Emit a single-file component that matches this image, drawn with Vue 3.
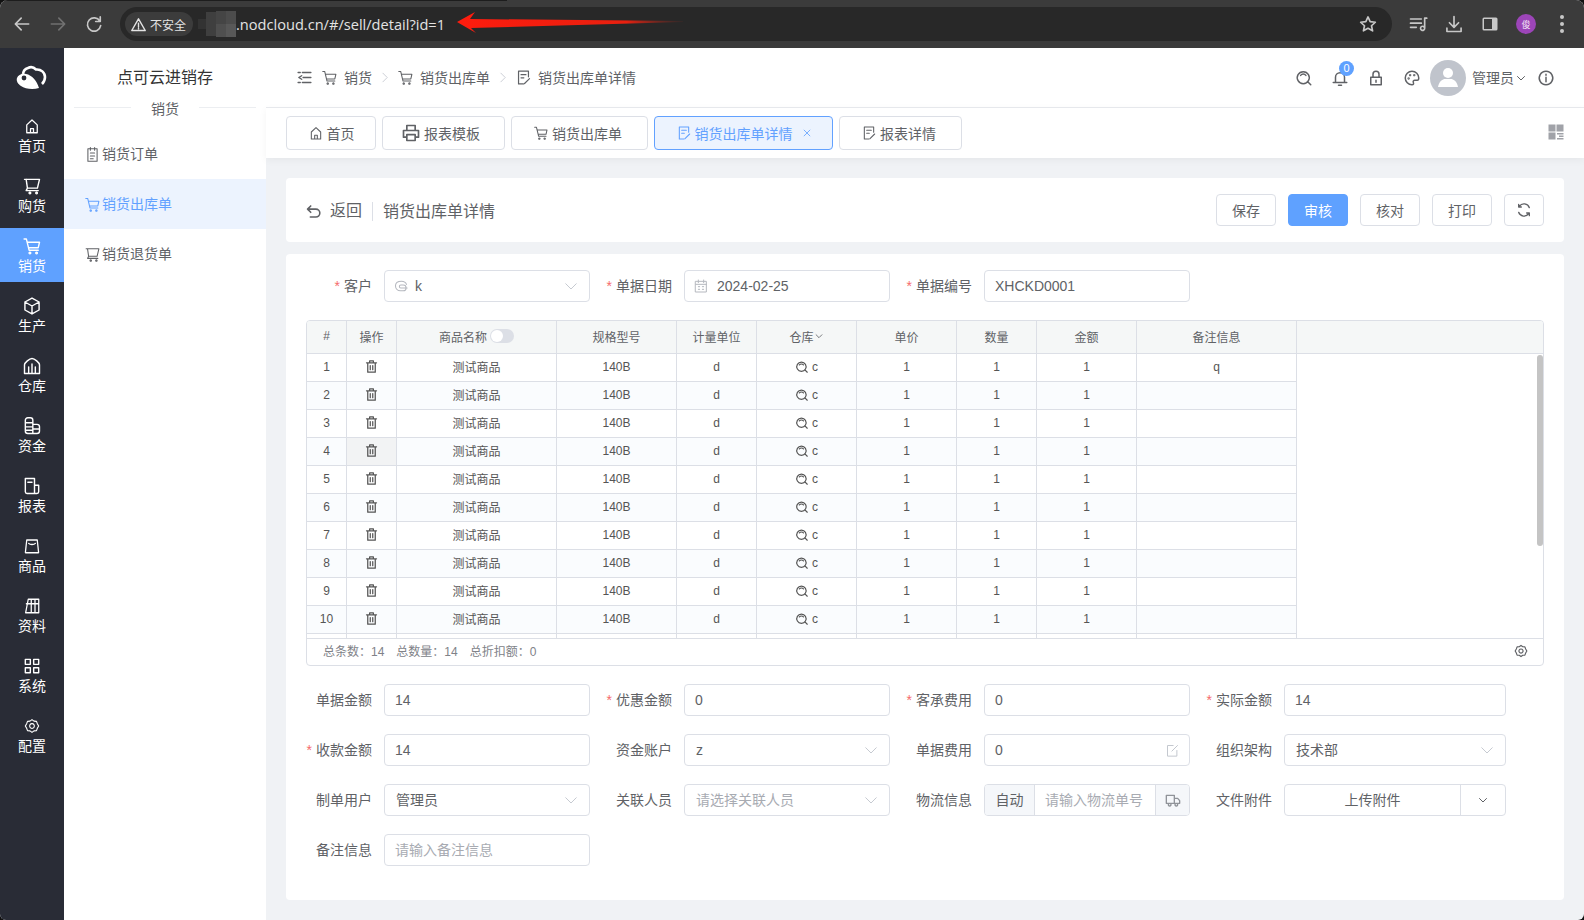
<template>
  <div class="shell">
    <!-- browser bar -->
    <header class="browser">
      <Ico name="arrowLeft" :size="20" class="nav" />
      <Ico name="arrowRight" :size="20" class="nav nav-off" />
      <Ico name="reload" :size="20" class="nav" />
      <div class="omnibox">
        <div class="chip"><Ico name="warn" :size="17" /><span>不安全</span></div>
        <svg class="mosaic" width="38" height="26" viewBox="0 0 38 26">
          <rect x="0" y="8" width="8" height="10" fill="#333" />
          <rect x="8" y="1" width="10" height="24" fill="#3f3f3f" />
          <rect x="18" y="0" width="10" height="13" fill="#454545" />
          <rect x="28" y="0" width="10" height="13" fill="#4c4c4c" />
          <rect x="18" y="13" width="10" height="13" fill="#4f4f4f" />
          <rect x="28" y="13" width="10" height="13" fill="#585858" />
        </svg>
        <span class="url">.nodcloud.cn/#/sell/detail?id=1</span>
        <svg class="red-arrow" width="226" height="24" viewBox="0 0 226 24">
          <defs>
            <linearGradient id="arrowFade" x1="0" x2="1" y1="0" y2="0">
              <stop offset="0" stop-color="#ff1c0e" />
              <stop offset="0.75" stop-color="#e8200f" />
              <stop offset="1" stop-color="#8a2a20" stop-opacity="0.1" />
            </linearGradient>
          </defs>
          <path d="M0 11 18 1 13 8 226 10 226 11 14 17 19 22z" fill="url(#arrowFade)" />
        </svg>
        <Ico name="star" :size="20" class="star" />
      </div>
      <div class="browser-tools">
        <Ico name="media" :size="20" />
        <Ico name="download" :size="20" />
        <svg width="18" height="18" viewBox="0 0 18 18"><rect x="1.5" y="2.5" width="15" height="13" rx="1.5" fill="#c8c8c8" /><rect x="3" y="4" width="8" height="10" fill="#3b3b3b" /></svg>
        <span class="profile">俊</span>
        <span class="dots"><i></i><i></i><i></i></span>
      </div>
    </header>

    <div class="app">
      <!-- main rail -->
      <nav class="rail">
        <svg class="logo" width="32" height="26" viewBox="0 0 32 26">
          <path d="M7 9a7 7 0 0 1 5-6c3-1.500 6-.5 8 1.500 5-.5 9 3 9 7.500 0 3-1.500 5.500-3 7" fill="none" stroke="#fff" stroke-width="2.600" />
          <path d="M1 13c1-3 5-5 9-4 6 1 11 7 13 14-6 2-14 1-18-2-3-2-5-5-4-8z" fill="#fff" />
          <circle cx="8" cy="13" r="2.400" fill="#292c36" />
        </svg>
        <a v-for="m in railItems" :key="m.label" class="rail-item" :class="{ on: m.label === '销货' }">
          <span class="rail-ico"><Ico :name="m.icon" :size="m.size || 20" :sw="1.7" /></span>
          <span>{{ m.label }}</span>
        </a>
      </nav>

      <!-- sub menu -->
      <aside class="subnav">
        <div class="brand">点可云进销存</div>
        <div class="sub-title"><span>销货</span></div>
        <a v-for="s in subItems" :key="s.label" class="sub-item" :class="{ on: s.on }">
          <Ico :name="s.icon" :size="17" :sw="1.5" />
          <span class="zh">{{ s.label }}</span>
        </a>
      </aside>

      <main class="main">
        <div class="topbar">
          <Ico name="fold" :size="17" class="fold" />
          <div class="crumbs">
            <Ico name="sellCart" :size="17" :sw="1.5" /><span class="crumb-text zh">销货</span>
            <Ico name="chevronRight" :size="13" :sw="1.5" class="crumb-sep" />
            <Ico name="sellCart" :size="17" :sw="1.5" /><span class="crumb-text zh">销货出库单</span>
            <Ico name="chevronRight" :size="13" :sw="1.5" class="crumb-sep" />
            <Ico name="docEdit" :size="17" :sw="1.7" /><span class="crumb-text zh">销货出库单详情</span>
          </div>
          <div class="top-tools">
            <Ico name="search" :size="18" />
            <span class="bell"><Ico name="bell" :size="18" /><b>0</b></span>
            <Ico name="lock" :size="18" />
            <Ico name="palette" :size="18" />
            <span class="user">
              <svg class="avatar" width="36" height="36" viewBox="0 0 36 36">
                <circle cx="18" cy="18" r="18" fill="#c0c4cc" />
                <circle cx="18" cy="13" r="5" fill="#fff" />
                <path d="M8 27c1-6 5-8 7-8h6c2 0 6 2 7 8z" fill="#fff" />
              </svg>
              <span class="user-name zh">管理员</span>
              <Ico name="chevronDown" :size="12" />
            </span>
            <Ico name="info" :size="18" />
          </div>
        </div>

        <div class="tabbar">
          <a v-for="t in tabs" :key="t.label" class="tab" :class="{ on: t.on }" :style="{ width: t.width + 'px' }">
            <Ico :name="t.icon" :size="t.icon === 'printer' ? 20 : 16" :sw="t.icon === 'printer' ? 2 : 1.6" />
            <span>{{ t.label }}</span>
            <Ico v-if="t.on" name="close" :size="10" class="tab-close" />
          </a>
          <svg class="tab-grid" width="16" height="16" viewBox="0 0 16 16">
            <rect x="0.500" y="0.500" width="7" height="7" fill="#a0a2a8" />
            <rect x="8.500" y="0.500" width="7" height="7" fill="#a0a2a8" />
            <rect x="0.500" y="8.500" width="7" height="7" fill="#a0a2a8" />
            <rect x="9" y="9" width="6.500" height="1.500" fill="#a0a2a8" />
            <rect x="11" y="11.500" width="4.500" height="1.500" fill="#a0a2a8" />
            <rect x="9" y="14" width="6.500" height="1.500" fill="#a0a2a8" />
          </svg>
        </div>

        <div class="content">
          <section class="card head-card">
            <a class="back"><Ico name="back" :size="19" /><span>返回</span></a>
            <span class="head-title">销货出库单详情</span>
            <div class="head-btns">
              <button class="btn">保存</button>
              <button class="btn primary">审核</button>
              <button class="btn">核对</button>
              <button class="btn">打印</button>
              <button class="btn icon-btn"><Ico name="refresh" :size="16" /></button>
            </div>
          </section>

          <section class="card form-card">
            <div class="form-grid top-form">
              <div class="field">
                <label><em>*</em>客户</label>
                <div class="input select"><Ico name="swirl" :size="17" :sw="1.5" class="prefix" /><span>k</span><Ico name="chevronDown" :size="18" :sw="1.2" class="suffix" /></div>
              </div>
              <div class="field">
                <label><em>*</em>单据日期</label>
                <div class="input"><Ico name="calendar" :size="16" :sw="1.5" class="prefix wide" /><span>2024-02-25</span></div>
              </div>
              <div class="field">
                <label><em>*</em>单据编号</label>
                <div class="input"><span>XHCKD0001</span></div>
              </div>
            </div>

            <div class="grid-table">
              <div class="thead">
                <div class="cols">
                  <div class="cell">#</div>
                  <div class="cell">操作</div>
                  <div class="cell">商品名称<i class="switch"></i></div>
                  <div class="cell">规格型号</div>
                  <div class="cell">计量单位</div>
                  <div class="cell">仓库<Ico name="chevronDown" :size="10" /></div>
                  <div class="cell">单价</div>
                  <div class="cell">数量</div>
                  <div class="cell">金额</div>
                  <div class="cell">备注信息</div>
                </div>
              </div>
              <div class="tbody">
                <div v-for="r in rows" :key="r" class="cols row" :class="{ even: r % 2 === 0 }">
                  <div class="cell">{{ r }}</div>
                  <div class="cell" :class="{ hover: r === 4 }"><Ico name="trash" :size="15" /></div>
                  <div class="cell">测试商品</div>
                  <div class="cell">140B</div>
                  <div class="cell">d</div>
                  <div class="cell store"><Ico name="search" :size="14" /><span>c</span></div>
                  <div class="cell">1</div>
                  <div class="cell">1</div>
                  <div class="cell">1</div>
                  <div class="cell">{{ r === 1 ? 'q' : '' }}</div>
                </div>
                <!-- next row only peeks out under the fold -->
                <div class="cols row">
                  <div v-for="n in 10" :key="n" class="cell"></div>
                </div>
                <i class="scrollbar"></i>
              </div>
              <div class="tfoot">
                <span>总条数：14</span>
                <span>总数量：14</span>
                <span>总折扣额：0</span>
                <Ico name="gear" :size="14" class="foot-gear" />
              </div>
            </div>

            <div class="form-grid bottom-form">
              <div class="field">
                <label>单据金额</label>
                <div class="input"><span>14</span></div>
              </div>
              <div class="field">
                <label><em>*</em>优惠金额</label>
                <div class="input"><span>0</span></div>
              </div>
              <div class="field">
                <label><em>*</em>客承费用</label>
                <div class="input"><span>0</span></div>
              </div>
              <div class="field">
                <label><em>*</em>实际金额</label>
                <div class="input"><span>14</span></div>
              </div>

              <div class="field">
                <label><em>*</em>收款金额</label>
                <div class="input"><span>14</span></div>
              </div>
              <div class="field">
                <label>资金账户</label>
                <div class="input select"><span>z</span><Ico name="chevronDown" :size="18" :sw="1.2" class="suffix" /></div>
              </div>
              <div class="field">
                <label>单据费用</label>
                <div class="input"><span>0</span><Ico name="edit" :size="15" :sw="1.5" class="suffix" /></div>
              </div>
              <div class="field">
                <label>组织架构</label>
                <div class="input select"><span class="zh">技术部</span><Ico name="chevronDown" :size="18" :sw="1.2" class="suffix" /></div>
              </div>

              <div class="field">
                <label>制单用户</label>
                <div class="input select"><span class="zh">管理员</span><Ico name="chevronDown" :size="18" :sw="1.2" class="suffix" /></div>
              </div>
              <div class="field">
                <label>关联人员</label>
                <div class="input select"><span class="ph zh">请选择关联人员</span><Ico name="chevronDown" :size="18" :sw="1.2" class="suffix" /></div>
              </div>
              <div class="field">
                <label>物流信息</label>
                <div class="input group">
                  <span class="addon first zh">自动</span>
                  <span class="ph group-mid zh">请输入物流单号</span>
                  <span class="addon last"><Ico name="truck" :size="16" /></span>
                </div>
              </div>
              <div class="field">
                <label>文件附件</label>
                <div class="input group">
                  <span class="upload zh">上传附件</span>
                  <span class="upload-arrow"><Ico name="chevronDown" :size="12" /></span>
                </div>
              </div>

              <div class="field">
                <label>备注信息</label>
                <div class="input"><span class="ph zh">请输入备注信息</span></div>
              </div>
            </div>
          </section>
        </div>
      </main>
    </div>
  </div>
</template>

<script setup>
import { h } from 'vue'

const wheels = 'M9.500 19.500a1 1 0 1 0 .01 0zM17.500 19.500a1 1 0 1 0 .01 0z'

const icons = {
  arrowLeft: 'M20 12H5M11 5l-7 7 7 7',
  arrowRight: 'M4 12h15M13 5l7 7-7 7',
  reload: 'M19 8.500a8 8 0 1 0 1 5.500M19.500 3.500v5.500H14',
  warn: 'M12 4l9.500 16.500h-19zM12 10v5.500M12 17.200v1',
  star: 'M12 3.500l2.600 5.700 6.200.7-4.600 4.200 1.300 6.100L12 17.100l-5.500 3.100 1.300-6.100-4.600-4.200 6.200-.7z',
  media: 'M3 6h13M3 11h13M3 16h7M20 5v12M20 5h2.500M20 17a2.500 2.500 0 1 1-.01-.1',
  download: 'M12 3v13M6.500 10.500 12 16l5.500-5.500M3.500 17v4h17v-4',
  home: 'M5 21V10.500L12 4l7 6.500V21zM10 21v-5.500h4V21',
  buyCart: 'M3 4h18l-2.500 10.500H6.500L5 4M6.500 14.500 5 17.500h14.500' + wheels,
  sellCart: 'M2.500 3.500h2.700L8.500 17h11M7 7.500h14l-1.500 6.500H8' + wheels,
  box: 'M12 2.500l8.500 4.700v9.600L12 21.500l-8.500-4.700V7.200zM3.500 7.200 12 12l8.500-4.800M12 12v9.500',
  store: 'M3 21V10.500C3 8 9 3 12 3s9 5 9 7.500V21zM8 21v-8M12 21V9.500M16 21v-8',
  funds: 'M4 5a3 3 0 0 1 3-3h3a3 3 0 0 1 3 3v16H7a3 3 0 0 1-3-3zM13 10h5a3 3 0 0 1 3 3v5a3 3 0 0 1-3 3h-5M4 8h9M4 13h9M4 17h9M13 15.500h8',
  report: 'M4 3h11v18H6a2 2 0 0 1-2-2zM15 11h5v8a2 2 0 0 1-2 2h-3M7 7.500h5',
  goods: 'M5 4h14l1.800 16.500a.5.5 0 0 1-.5.5H3.700a.5.5 0 0 1-.5-.5zM7.500 8.500c2 2 7 2 9 0',
  books: 'M3.500 21 7 3h4v18zM11 3h5v18h-5zM16 3h5v18h-5zM4.500 9H21',
  apps: 'M4 4h6v6H4zM14 4h6v6h-6zM4 14h6v6H4zM14 14h6v6h-6z',
  gear: 'M12 2.500l3 2.200 3.700.3 1.300 3.500L22 12l-2 3.500-1.300 3.500-3.700.3-3 2.200-3-2.200-3.700-.3L4 15.500 2 12l2-3.500L5.300 5 9 4.700zM12 8.500a3.500 3.500 0 1 0 .01 0z',
  order: 'M5.500 4h13v17.500h-13zM9 2v4M15 2v4M9 10h6M9 14h6M9 18h4',
  docEdit: 'M19 11V3H5v18h7M8.500 8h7M8.500 12.500h4M13.500 20.500l7-7',
  printer: 'M7 9V3h10v6M7 17H3V9h18v8h-4M7 14h10v7H7z',
  search: 'M11 3.500a8 8 0 1 0 .01 0zM17 17l4 4M7.500 8.500a4.500 4.500 0 0 1 7 0',
  bell: 'M6 18v-7a6 6 0 0 1 12 0v7M3 18h18M10 21.500h4',
  lock: 'M5 11h14v10H5zM8 11V7a4 4 0 0 1 8 0v4M12 15v2.500',
  palette: 'M12 3a9 9 0 1 0 0 18c2 0 2.500-1.500 1.800-3-.8-1.700.3-3 2-3H19c1.500 0 2-1 2-3 0-5-4-9-9-9zM7.500 12a.6.6 0 1 0 .01 0zM9.500 7.500a.6.6 0 1 0 .01 0zM15 7.500a.6.6 0 1 0 .01 0z',
  info: 'M12 3a9 9 0 1 0 .01 0zM12 11v6M12 7v1.200',
  refresh: 'M20 8.500A8.500 8.500 0 0 0 5 6.500M4 15.500a8.500 8.500 0 0 0 15 2M4 3.500v4h4M20 20.500v-4h-4',
  back: 'M4.500 9H15a5 5 0 0 1 0 10H8M8.500 5l-4 4 4 4',
  fold: 'M9 5h12M3 5h3M10 12h11M8 9.500 4 12l4 2.500M9 19h12M3 19h3',
  chevronDown: 'M5 9l7 7 7-7',
  chevronRight: 'M9 4l8 8-8 8',
  close: 'M5 5l14 14M19 5 5 19',
  swirl: 'M19 9c-1-3-4-4.500-7-4.500C7 4.500 3.500 7 3.500 11s3 7 7 7h4a4 4 0 0 0 0-8H11a2 2 0 0 0 0 4h9',
  calendar: 'M4 5h16v16H4zM8 3v4M16 3v4M4 9.500h16M8 13h2M14 13h2M8 17h2M14 17h2',
  trash: 'M4 6h16M9 6V3h6v3M6 6v15h12V6M10 10.500v6.500M14 10.500v6.500',
  truck: 'M2 5h12v12H2zM14 9.500h5l3 3.500v4h-8M7 17a2 2 0 1 0 .01 0zM17 17a2 2 0 1 0 .01 0z',
  edit: 'M19 12v9H4V4h9M11 13l9-9',
}

// small svg helper, all icons are one stroked path
const Ico = (props) =>
  h('svg', { width: props.size, height: props.size, viewBox: '0 0 24 24', fill: 'none', stroke: 'currentColor', 'stroke-width': props.sw || 2, 'stroke-linejoin': 'round', 'stroke-linecap': 'round' }, [
    h('path', { d: icons[props.name] }),
  ])
Ico.props = ['name', 'size', 'sw']

const railItems = [
  { label: '首页', icon: 'home', size: 18 },
  { label: '购货', icon: 'buyCart' },
  { label: '销货', icon: 'sellCart' },
  { label: '生产', icon: 'box' },
  { label: '仓库', icon: 'store' },
  { label: '资金', icon: 'funds' },
  { label: '报表', icon: 'report' },
  { label: '商品', icon: 'goods', size: 18 },
  { label: '资料', icon: 'books', size: 18 },
  { label: '系统', icon: 'apps' },
  { label: '配置', icon: 'gear', size: 16 },
]

const subItems = [
  { label: '销货订单', icon: 'order' },
  { label: '销货出库单', icon: 'sellCart', on: true },
  { label: '销货退货单', icon: 'buyCart' },
]

const tabs = [
  { label: '首页', icon: 'home', width: 90 },
  { label: '报表模板', icon: 'printer', width: 123 },
  { label: '销货出库单', icon: 'sellCart', width: 137 },
  { label: '销货出库单详情', icon: 'docEdit', width: 179, on: true },
  { label: '报表详情', icon: 'docEdit', width: 123 },
]

const rows = Array.from({ length: 10 }, (_, i) => i + 1)
</script>

<style scoped>
.shell {
  width: 1584px;
  height: 920px;
  overflow: hidden;
  border-radius: 8px 8px 6px 6px;
  display: flex;
  flex-direction: column;
  background: #f0f2f5;
  font-family: "Liberation Sans", "Noto Sans CJK SC", sans-serif;
  font-size: 14px;
  color: #606266;
}
/* the CJK font sits a bit low in the line box */
.zh {
  padding-bottom: 2px;
}

/* browser */
.browser {
  position: relative;
  flex: none;
  height: 48px;
  display: flex;
  align-items: center;
  background: #3b3b3b;
  color: #c7c7c7;
}
.browser::before {
  content: '';
  position: absolute;
  left: 0;
  top: 0;
  width: 507px;
  height: 1px;
  background: #1d1d1d;
}
.nav {
  flex: none;
  margin-left: 12px;
  margin-right: 4px;
}
.nav-off {
  color: #707070;
}
.omnibox {
  position: absolute;
  left: 120px;
  top: 7px;
  width: 1272px;
  height: 34px;
  display: flex;
  align-items: center;
  background: #282828;
  border-radius: 17px;
}
.chip {
  margin-left: 5px;
  width: 68px;
  height: 24px;
  display: flex;
  align-items: center;
  gap: 3px;
  padding-left: 5px;
  box-sizing: border-box;
  background: #3c3c3c;
  border-radius: 12px;
  font-size: 12px;
  color: #e3e3e3;
}
.mosaic {
  margin-left: 5px;
  flex: none;
}
.url {
  font-family: "Open Sans", sans-serif;
  font-size: 14.6px;
  color: #e3e3e3;
  white-space: nowrap;
}
.red-arrow {
  position: absolute;
  left: 337px;
  top: 4px;
}
.star {
  margin-left: auto;
  margin-right: 14px;
}
.browser-tools {
  position: absolute;
  left: 1400px;
  top: 0;
  height: 48px;
  display: grid;
  grid-template-columns: repeat(5, 36px);
  justify-items: center;
  align-items: center;
}
.profile {
  width: 20px;
  height: 20px;
  border-radius: 50%;
  background: #9c45b8;
  color: #f0e0f5;
  font-size: 9px;
  display: flex;
  align-items: center;
  justify-content: center;
}
.dots {
  width: 4px;
  display: flex;
  flex-direction: column;
  gap: 3px;
}
.dots i {
  width: 4px;
  height: 4px;
  background: #c7c7c7;
  border-radius: 50%;
}

.app {
  flex: 1;
  min-height: 0;
  display: flex;
}

/* rail */
.rail {
  flex: none;
  width: 64px;
  background: #292c36;
  color: #fff;
  display: flex;
  flex-direction: column;
  align-items: center;
  padding-top: 17px;
}
.logo {
  margin-bottom: 17px;
}
.rail-item {
  width: 64px;
  height: 54px;
  margin-bottom: 6px;
  padding-top: 8px;
  box-sizing: border-box;
  display: flex;
  flex-direction: column;
  align-items: center;
  line-height: 20px;
}
.rail-ico {
  height: 20px;
  display: flex;
  align-items: center;
}
.rail-item.on {
  background: #5fa1ff;
}

/* sub menu */
.subnav {
  flex: none;
  width: 202px;
  background: #fff;
}
.brand {
  height: 59px;
  line-height: 60px;
  text-align: center;
  font-size: 16px;
  color: #333;
}
.sub-title {
  height: 22px;
  margin: 0 10px;
  position: relative;
  text-align: center;
  line-height: 22px;
}
.sub-title::before {
  content: '';
  position: absolute;
  left: 0;
  right: 0;
  top: 0;
  height: 1px;
  background: #eceef1;
}
.sub-title span {
  position: relative;
  display: inline-block;
  padding: 0 20px;
  background: #fff;
  line-height: 20px;
  top: -9px;
}
.sub-item {
  height: 50px;
  display: flex;
  align-items: center;
  gap: 1px;
  padding-left: 20px;
}
.sub-item.on {
  background: #ecf3fe;
  color: #62a1ff;
}

/* top */
.main {
  flex: 1;
  min-width: 0;
  display: flex;
  flex-direction: column;
}
.topbar {
  flex: none;
  height: 59px;
  box-sizing: content-box;
  border-bottom: 1px solid #e9ebef;
  background: #fff;
  display: flex;
  align-items: center;
  padding-left: 30px;
  position: relative;
}
.fold {
  margin-right: 8px;
}
.crumbs {
  display: flex;
  align-items: center;
}
.crumb-text {
  margin-left: 6px;
}
.crumb-sep {
  margin: 0 6px;
  color: #c0c4cc;
}
.top-tools {
  margin-left: auto;
  margin-right: 29px;
  display: flex;
  align-items: center;
  gap: 18px;
}
.bell {
  position: relative;
  display: flex;
}
.bell b {
  position: absolute;
  left: 8px;
  top: -8px;
  width: 15px;
  height: 15px;
  border-radius: 50%;
  background: #5fa1ff;
  color: #fff;
  font-size: 11px;
  font-weight: 400;
  line-height: 15px;
  text-align: center;
}
.user {
  display: flex;
  align-items: center;
  margin-left: -9px;
  margin-right: -8px;
}
.user-name {
  margin-left: 6px;
  margin-right: 1px;
}

/* tabs */
.tabbar {
  flex: none;
  height: 50px;
  position: relative;
  z-index: 1;
  background: #fff;
  box-shadow: 0 2px 8px rgba(0, 0, 0, 0.05);
  display: flex;
  align-items: center;
  gap: 6px;
  padding-left: 20px;
  padding-bottom: 1px;
  box-sizing: border-box;
}
.tab {
  flex: none;
  height: 34px;
  box-sizing: border-box;
  border: 1px solid #dcdfe6;
  border-radius: 4px;
  display: flex;
  align-items: center;
  justify-content: center;
  gap: 3px;
  padding-right: 4px;
}
.tab:first-child {
  padding-right: 0;
}
.tab:nth-child(2) {
  padding-right: 6px;
}
.tab.on {
  background: #ecf3fe;
  border-color: #62a1ff;
  color: #62a1ff;
  padding-right: 0;
}
.tab-close {
  margin-left: 6px;
}
.tab-grid {
  position: absolute;
  right: 20px;
  top: 16px;
}

/* content */
.content {
  flex: 1;
  min-height: 0;
  padding: 20px 20px 20px;
  display: flex;
  flex-direction: column;
  gap: 12px;
}
.card {
  background: #fff;
  border-radius: 4px;
}
.head-card {
  flex: none;
  height: 64px;
  display: flex;
  align-items: center;
  padding: 0 20px;
  font-size: 16px;
}
.back {
  display: flex;
  align-items: center;
  gap: 7px;
  margin-left: -2px;
  padding-right: 10px;
  border-right: 1px solid #dcdfe6;
  line-height: 16px;
  margin-top: 2px;
}
.head-title {
  margin-left: 10px;
  padding-bottom: 1px;
}
.head-btns {
  margin-left: auto;
  display: flex;
  gap: 12px;
}
.btn {
  width: 60px;
  height: 32px;
  padding: 0;
  border: 1px solid #dcdfe6;
  border-radius: 4px;
  background: #fff;
  color: #606266;
  font: inherit;
  font-size: 14px;
}
.btn.primary {
  background: #5fa1ff;
  border-color: #5fa1ff;
  color: #fff;
}
.icon-btn {
  width: 40px;
  display: flex;
  align-items: center;
  justify-content: center;
}

/* form */
.form-card {
  flex: 1;
  padding: 16px 20px 0;
}
.form-grid {
  display: grid;
  grid-template-columns: 300px 300px 300px 316px;
  row-gap: 18px;
  margin-left: -16px;
}
.bottom-form {
  margin-top: 18px;
}
.field {
  display: flex;
  align-items: center;
  height: 32px;
}
.field label {
  flex: none;
  width: 82px;
  margin-right: 12px;
  padding-bottom: 2px;
  text-align: right;
}
.field label em {
  font-style: normal;
  color: #f56c6c;
  margin-right: 4px;
}
.input {
  flex: 1;
  min-width: 0;
  height: 32px;
  box-sizing: border-box;
  border: 1px solid #dcdfe6;
  border-radius: 4px;
  display: flex;
  align-items: center;
  padding: 0 10px;
}
.input.select {
  padding-left: 11px;
}
.prefix {
  margin-left: -3px;
  margin-right: 5px;
  color: #b5b8bf;
}
.prefix.wide {
  margin-left: -2px;
  margin-right: 8px;
}
.suffix {
  margin-left: auto;
  margin-right: -1px;
  color: #c0c4cc;
}
.ph {
  color: #a8abb2;
}
.group {
  padding: 0;
  overflow: hidden;
}
.addon {
  height: 100%;
  box-sizing: border-box;
  display: flex;
  align-items: center;
  justify-content: center;
  background: #f5f7fa;
}
.addon.first {
  width: 50px;
  border-right: 1px solid #dcdfe6;
}
.addon.last {
  margin-left: auto;
  width: 34px;
  border-left: 1px solid #dcdfe6;
  color: #909399;
}
.group-mid {
  padding-left: 10px;
  white-space: nowrap;
}
.upload {
  flex: 1;
  text-align: center;
}
.upload-arrow {
  flex: none;
  width: 45px;
  height: 100%;
  border-left: 1px solid #dcdfe6;
  display: flex;
  align-items: center;
  justify-content: center;
  box-sizing: border-box;
}

/* table */
.grid-table {
  margin-top: 18px;
  height: 346px;
  box-sizing: border-box;
  border: 1px solid #dcdfe6;
  border-radius: 4px;
  font-size: 12px;
  display: flex;
  flex-direction: column;
  overflow: hidden;
}
.thead {
  flex: none;
  height: 32px;
  background: #f5f7f7;
  border-bottom: 1px solid #dcdfe6;
  box-sizing: content-box;
}
.cols {
  width: 990px;
  display: grid;
  grid-template-columns: 40px 50px 160px 120px 80px 100px 100px 80px 100px 160px;
  height: 100%;
}
.cell {
  display: flex;
  align-items: center;
  justify-content: center;
  border-right: 1px solid #dcdfe6;
  box-sizing: border-box;
  min-width: 0;
  padding-bottom: 2px;
}
.switch {
  position: relative;
  width: 24px;
  height: 14px;
  margin-left: 3px;
  background: #dcdfe6;
  border-radius: 7px;
}
.switch::after {
  content: '';
  position: absolute;
  left: 1px;
  top: 1px;
  width: 12px;
  height: 12px;
  border-radius: 50%;
  background: #fff;
}
.tbody {
  flex: none;
  height: 284px;
  overflow: hidden;
  position: relative;
}
.row {
  height: 28px;
  border-bottom: 1px solid #dcdfe6;
  box-sizing: border-box;
  color: #555;
}
.row.even {
  background: #fafcfe;
}
.cell.hover {
  background: #f2f3f4;
}
.store {
  gap: 3px;
}
.scrollbar {
  position: absolute;
  right: 0;
  top: 1px;
  width: 6px;
  height: 191px;
  border-radius: 3px;
  background: #c4c4c4;
}
.tfoot {
  flex: 1;
  border-top: 1px solid #dcdfe6;
  display: flex;
  align-items: center;
  gap: 12px;
  padding-left: 16px;
  padding-bottom: 3px;
  color: #808288;
}
.foot-gear {
  margin-left: auto;
  margin-right: 15px;
  color: #606266;
}
</style>

<style>
html,
body {
  background: #111;
}
</style>
